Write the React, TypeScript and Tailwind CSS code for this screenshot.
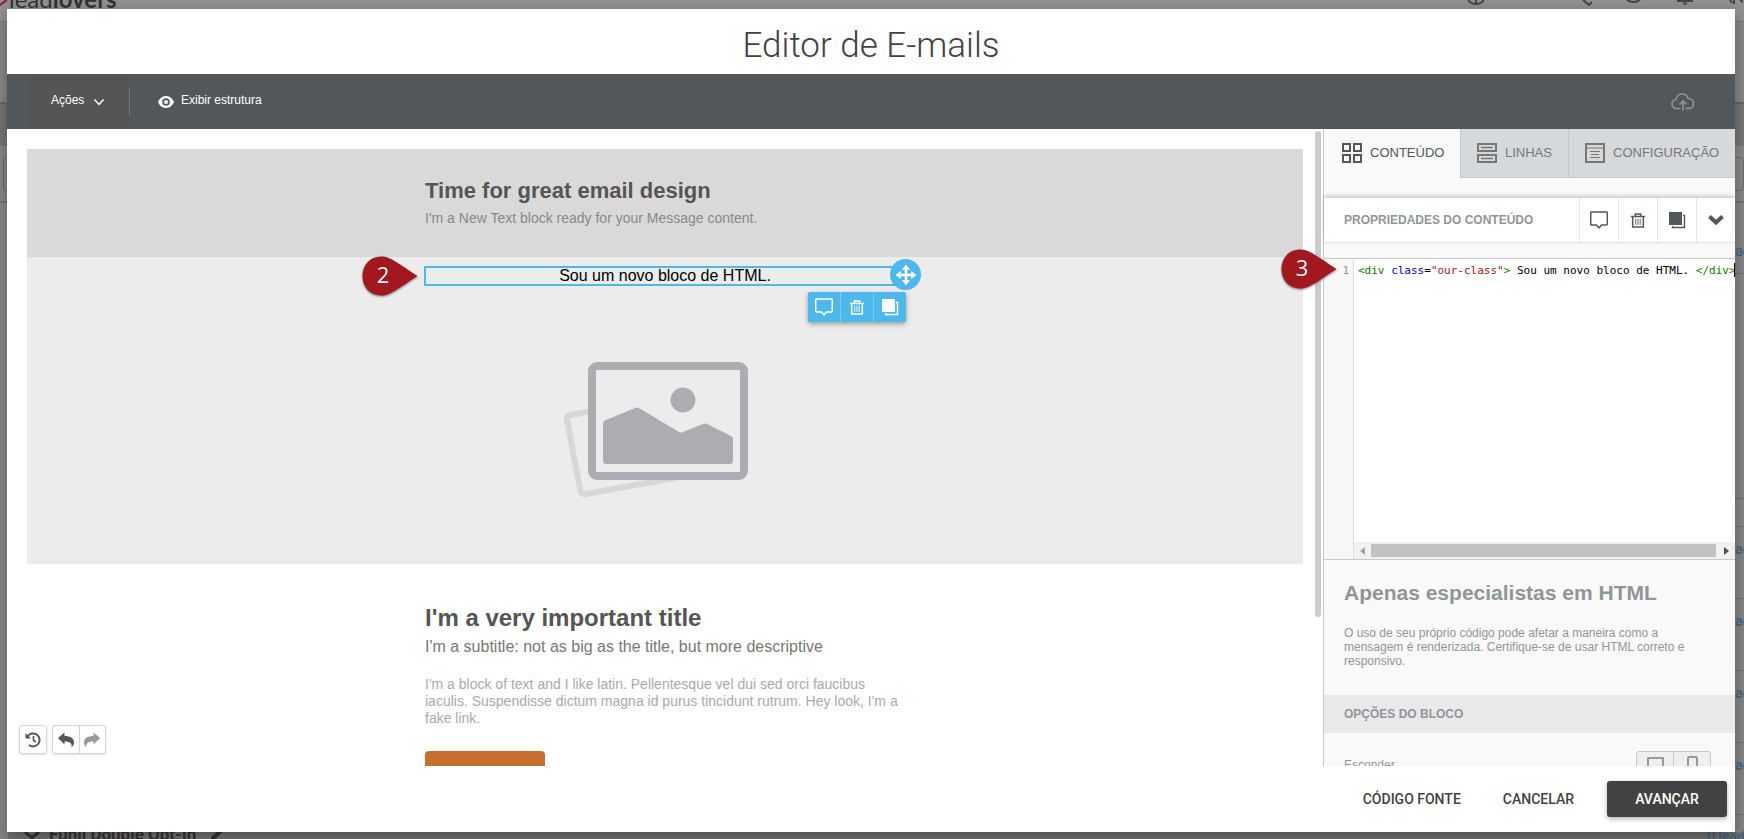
import type { ReactNode } from "react"

type IconProps = { className?: string }

function CommentIcon({ className }: IconProps) {
  return (
    <svg className={className} viewBox="0 0 18 18" fill="none" stroke="currentColor" strokeWidth="1.5" strokeLinejoin="round">
      <path d="M1.500 1h15a.8.8 0 0 1 .8.8v11.400a.8.8 0 0 1-.8.8h-5L9 17l-2.500-3h-5a.8.8 0 0 1-.8-.8V1.800a.8.8 0 0 1 .8-.8z" />
    </svg>
  )
}

function TrashIcon({ className }: IconProps) {
  return (
    <svg className={className} viewBox="0 0 18 18" fill="none" stroke="currentColor">
      <path d="M1 4.500h16M6 4.500V1.800h6v2.700" strokeWidth="1.700" />
      <path d="M3 4.500V16.300h12V4.500" strokeWidth="1.700" />
      <path d="M6.500 7v7M9 7v7M11.500 7v7" strokeWidth="1" />
    </svg>
  )
}

function CopyIcon({ className }: IconProps) {
  return (
    <svg className={className} viewBox="0 0 18 18">
      <path d="M1 1h13v13H1z" fill="currentColor" />
      <path d="M15 4.500h1.500v12h-12V15" fill="none" stroke="currentColor" strokeWidth="1.400" />
    </svg>
  )
}

function Pin({ label }: { label: string }) {
  return (
    <span className="relative block h-10 w-14 drop-shadow-[0_1px_1px_rgba(0,0,0,0.5)]">
      <svg className="h-10 w-14" viewBox="0 0 56 40">
        <path d="M19 .5C28 .5 34 6 55.500 20 34 34 28 39.500 19 39.500 8 39.500.5 31 .5 20S8 .5 19 .5z" fill="#a1181f" />
      </svg>
      <span className="absolute inset-y-0 left-0 flex w-[42px] items-center justify-center pb-1 font-['Open_Sans',sans-serif] text-[22px] text-white">
        {label}
      </span>
    </span>
  )
}

function PicturePlaceholder() {
  return (
    <svg className="h-[140px] w-[188px]" viewBox="0 0 188 140" role="img" aria-label="Imagem">
      <path d="M30 50 7 54q-4 1-3 5l13 69q1 6 6 5L116 116" fill="none" stroke="#d7d7d8" strokeWidth="6" />
      <rect x="29" y="5" width="152" height="110" rx="5" fill="#ececec" stroke="#acadb2" strokeWidth="8" />
      <circle cx="120" cy="39" r="12.500" fill="#acadb2" />
      <path d="M40 63q0-3 3-4l29-12q2-1 4 0l40 24q2 1 4 0l20-8q2-1 4 0l24 12q2 1 2 3v22q0 3-3 3H43q-3 0-3-3z" fill="#acadb2" />
    </svg>
  )
}

function Backdrop() {
  return (
    <div className="absolute inset-0 overflow-hidden bg-[#848484]" aria-hidden="true">
      <div className="relative h-[22px] border-b border-[#777] bg-[#909090]">
        <svg className="absolute top-0 left-0 h-2 w-2" viewBox="0 0 8 8">
          <path d="M0 5 7 0" stroke="#8b1a4e" strokeWidth="2" />
        </svg>
        <p className="absolute -top-4 left-[9px] font-['Lato',sans-serif] text-[24px] leading-[30px] text-[#333]">
          lead<b>lovers</b>
        </p>
        <svg className="absolute top-0 right-0 h-2 w-[284px]" viewBox="0 0 284 8" fill="none" stroke="#444" strokeWidth="2">
          <path d="M8-2a8 6 0 0 0 16 0M16-2v6M123 0l6 5 3-3M166-2a8 6 0 0 0 15 0M217 1h16M223 3.500h4M270 0l2 3M274 0v4M280 0l3 2" />
        </svg>
      </div>
      <div className="h-[82px] border-b-2 border-[#666] bg-[#868686]" />
      <div className="h-[42px] bg-[#747474]" />
      <div className="h-[57px] border-b-2 border-[#717171] bg-[#868686] pt-[11px]">
        <div className="ml-[3px] h-[34px] rounded-sm border border-[#6b6b6b]" />
      </div>
    </div>
  )
}

function BackdropLists() {
  return (
    <div className="absolute inset-0 overflow-hidden font-['Roboto',sans-serif]" aria-hidden="true">
      <ul className="absolute top-[229px] right-0 h-[610px] w-[9px] overflow-hidden text-[14px] text-[#35627a]">
        <li className="h-[45px] border-b border-[#6d6d6d] pt-3">ad</li>
        <li className="h-[225px] border-b border-[#6d6d6d]" />
        <li className="h-[28px] border-b border-[#6d6d6d]" />
        {[1, 2, 3, 4].map((n) => (
          <li key={n} className="h-[72px] border-b border-[#6d6d6d] pt-3">
            ad
          </li>
        ))}
      </ul>
      <div className="absolute right-0 bottom-0 left-2 flex h-[7px] items-end bg-[#707070]">
        <svg className="absolute top-0 left-4 h-[7px] w-4" viewBox="0 0 16 7">
          <path d="m1 0 7 6 7-6" fill="none" stroke="#333" strokeWidth="3" />
        </svg>
        <p className="absolute -top-[8px] left-[41px] text-[17px] leading-5 font-bold text-[#333]">Funil Double Opt-In</p>
        <svg className="absolute top-0 left-[202px] h-[7px] w-4" viewBox="0 0 16 7">
          <path d="m2 7 10-9" stroke="#333" strokeWidth="4" />
        </svg>
        <p className="absolute top-[-5px] right-0 w-[37px] overflow-hidden text-[14px] leading-5 whitespace-nowrap text-[#35627a]">
          0 leads
        </p>
      </div>
    </div>
  )
}

function Toolbar() {
  return (
    <div className="flex h-[55px] shrink-0 items-center bg-[#51575a] pr-10 pl-5 text-[12px] text-white">
      <button className="flex h-full w-[102px] items-center gap-[9px] bg-[#555] pb-1 pl-6">
        Ações
        <svg className="mt-1 h-3 w-3" viewBox="0 0 12 12" fill="none" stroke="currentColor" strokeWidth="1.500">
          <path d="m1.500 3.500 4.500 5 4.500-5" />
        </svg>
      </button>
      <span className="h-7 w-px bg-[#757575]" />
      <button className="flex h-full items-center gap-[7px] pb-1 pl-7">
        <svg className="mt-1 h-3 w-4" viewBox="0 0 16 12">
          <path d="M8 0C4 0 1.300 3 0 6c1.300 3 4 6 8 6s6.700-3 8-6c-1.300-3-4-6-8-6z" fill="currentColor" />
          <circle cx="8" cy="6" r="3.800" fill="#51575a" />
          <circle cx="8" cy="6" r="2" fill="currentColor" />
        </svg>
        Exibir estrutura
      </button>
      <button className="ml-auto text-[#8f9496]" aria-label="Salvar">
        <svg className="h-[18px] w-6" viewBox="0 0 24 18" fill="none" stroke="currentColor" strokeWidth="1.600">
          <path d="M9.500 15.500H6a4.500 4.500 0 0 1-1-9C5.500 3 8 1 11 1c3 0 5.500 2 6 4.500 3 0 5.500 2 5.500 5s-2 5-5 5h-3" />
          <path d="M12 17.500V8M8.500 11.500 12 8l3.500 3.500" />
        </svg>
      </button>
    </div>
  )
}

function Canvas() {
  return (
    <div className="relative min-w-0 flex-1 overflow-hidden bg-white pt-5 pr-5 pl-5">
      <section className="h-[108px] bg-[#d9d9d9]">
        <div className="mx-auto w-[480px] pt-[30px]">
          <h2 className="text-[22px] leading-6 font-bold text-[#555]">Time for great email design</h2>
          <p className="pt-1 text-[14px] leading-[22px] text-[#888]">I'm a New Text block ready for your Message content.</p>
        </div>
      </section>

      <section className="h-[307px] bg-[#ececec] pt-[9px]">
        <div className="relative mx-auto h-5 w-[482px] border-2 border-[#4db8ea] text-center text-[16px] leading-4 text-black">
          Sou um novo bloco de HTML.
          <div className="absolute -top-3 right-full mr-2">
            <Pin label="2" />
          </div>
          <button
            className="absolute -top-[9px] -right-[17px] flex h-[31px] w-[31px] items-center justify-center rounded-full bg-[#4db8ea] text-white"
            aria-label="Mover"
          >
            <svg className="h-5 w-5" viewBox="0 0 20 20" fill="currentColor">
              <path d="M10 0l3.500 4.500H11v4.500h4.500V6.500L20 10l-4.500 3.500V11H11v4.500h2.500L10 20l-3.500-4.500H9V11H4.500v2.500L0 10l4.500-3.500V9H9V4.500H6.500z" stroke="currentColor" strokeWidth=".6" />
            </svg>
          </button>
          <div className="absolute top-6 -right-[2px] flex h-[30px] w-[98px] divide-x divide-[#7fcbef] rounded-xs bg-[#4db8ea] text-white shadow-[0_2px_5px_rgba(0,0,0,0.35)]">
            <button className="flex flex-1 items-center justify-center" aria-label="Comentar">
              <CommentIcon className="h-[18px] w-[18px]" />
            </button>
            <button className="flex flex-1 items-center justify-center" aria-label="Excluir">
              <TrashIcon className="h-[17px] w-4" />
            </button>
            <button className="flex flex-1 items-center justify-center" aria-label="Duplicar">
              <CopyIcon className="h-[18px] w-[18px]" />
            </button>
          </div>
        </div>
        <div className="mx-auto w-[480px] pt-[75px] pl-[138px]">
          <PicturePlaceholder />
        </div>
      </section>

      <section className="mx-auto w-[480px] pt-10">
        <h2 className="text-[24px] leading-7 font-bold text-[#555]">I'm a very important title</h2>
        <p className="pt-1 text-[16px] leading-[22px] text-[#777]">I'm a subtitle: not as big as the title, but more descriptive</p>
        <p className="pt-[18px] text-[14px] leading-[17px] text-[#aaa]">
          I'm a block of text and I like latin. Pellentesque vel dui sed orci faucibus iaculis. Suspendisse dictum magna
          id purus tincidunt rutrum. Hey look, I'm a fake link.
        </p>
        <button className="mt-6 block h-10 w-[120px] rounded-[4px] bg-[#c7702e]" aria-label="Button" />
      </section>

      <span className="absolute top-[2px] right-[2px] h-[486px] w-[6px] rounded-full bg-[#ccc]" />

      <div className="absolute bottom-3 left-3 flex gap-[5px] text-[#51575a]">
        <button
          className="flex h-[29px] w-7 items-center justify-center rounded-[3px] border border-[#d5d5d5] bg-white shadow-sm"
          aria-label="Histórico"
        >
          <svg className="h-4 w-4" viewBox="0 0 16 16" fill="none" stroke="currentColor" strokeWidth="2">
            <path d="M2.500 4.500A6.500 6.500 0 1 1 4 13" />
            <path d="M8.500 4v4.500l2.500 1.500" strokeWidth="1.700" />
            <path d="M.5 1v5.500H6z" fill="currentColor" stroke="none" />
          </svg>
        </button>
        <div className="flex h-[29px] w-[54px] divide-x divide-[#d5d5d5] rounded-[3px] border border-[#d5d5d5] bg-white shadow-sm">
          <button className="flex flex-1 items-center justify-center" aria-label="Desfazer">
            <svg className="h-4 w-4" viewBox="0 0 16 16" fill="currentColor">
              <path d="M0 6 6.500.500V4C12 4 16 6 16 10.500c0 2-1 3.500-2.500 5 .8-4-1.500-6-7-6v3z" />
            </svg>
          </button>
          <button className="flex flex-1 items-center justify-center text-[#999]" aria-label="Refazer">
            <svg className="h-4 w-4" viewBox="0 0 16 16" fill="currentColor">
              <path d="M16 6 9.500.500V4C4 4 0 6 0 10.500c0 2 1 3.500 2.500 5-.8-4 1.500-6 7-6v3z" />
            </svg>
          </button>
        </div>
      </div>
    </div>
  )
}

function HeaderButton({ label, children }: { label: string; children: ReactNode }) {
  return (
    <button className="flex w-[39px] items-center justify-center border-l border-[#e4e4e4]" aria-label={label}>
      {children}
    </button>
  )
}

function Sidebar() {
  return (
    <aside className="relative flex w-[412px] shrink-0 flex-col border-l border-[#c8c8c8] bg-[#f9f9f9] text-[#8f9699]">
      <div className="flex h-[49px] shrink-0 text-[13px] text-[#777]">
        <button className="flex w-[136px] items-center gap-2 pb-[2px] pl-[18px] text-[#51575a]">
          <svg className="h-5 w-5" viewBox="0 0 20 20" fill="none" stroke="currentColor" strokeWidth="2">
            <path d="M1 1h7v7H1zM12 1h7v7h-7zM1 12h7v7H1zM12 12h7v7h-7z" />
          </svg>
          CONTEÚDO
        </button>
        <button className="flex w-[108px] items-center gap-2 border-b border-l border-[#c8c8c8] bg-[#d5d9dc] pb-px pl-4">
          <svg className="h-5 w-5" viewBox="0 0 20 20" fill="none" stroke="currentColor" strokeWidth="2">
            <path d="M1 1h18v7H1zM1 12h18v7H1z" />
            <path d="M4 4.500h12M4 15.500h12" strokeWidth="1.400" />
          </svg>
          LINHAS
        </button>
        <button className="flex flex-1 items-center gap-2 border-b border-l border-[#c8c8c8] bg-[#d5d9dc] pb-px pl-4">
          <svg className="h-5 w-5 shrink-0" viewBox="0 0 20 20" fill="none" stroke="currentColor" strokeWidth="1.500">
            <path d="M1 1h18v18H1z" strokeWidth="2" />
            <path d="M2 5h16" strokeWidth="1" />
            <path d="M5 8.500h10M6 11.500h8M5 14.500h10" strokeWidth="1.200" />
          </svg>
          CONFIGURAÇÃO
        </button>
      </div>

      <div className="mt-5 flex h-[45px] shrink-0 border-b border-[#e4e4e4] bg-white shadow-[0_-2px_4px_rgba(0,0,0,0.2)]">
        <h3 className="flex flex-1 items-center pl-5 text-[12px] font-bold">PROPRIEDADES DO CONTEÚDO</h3>
        <div className="flex text-[#51575a]">
          <HeaderButton label="Comentar">
            <CommentIcon className="h-[18px] w-[18px]" />
          </HeaderButton>
          <HeaderButton label="Excluir">
            <TrashIcon className="h-[17px] w-4" />
          </HeaderButton>
          <HeaderButton label="Duplicar">
            <CopyIcon className="h-[18px] w-[18px]" />
          </HeaderButton>
          <HeaderButton label="Recolher">
            <svg className="h-4 w-4" viewBox="0 0 16 16" fill="none" stroke="currentColor" strokeWidth="4">
              <path d="m1.500 4.500 6.500 6 6.500-6" />
            </svg>
          </HeaderButton>
        </div>
      </div>

      <div className="relative mt-[15px] flex h-[302px] shrink-0 border-y border-[#c8c8c8] bg-white font-['DejaVu_Sans_Mono',monospace] text-[11px] leading-[14px]">
        <div className="w-[30px] shrink-0 border-r border-[#ddd] bg-[#f7f7f7] pt-[5px] pr-1 text-right text-[#999]">1</div>
        <div className="flex min-w-0 flex-1 flex-col">
          <code className="flex-1 pt-[5px] pl-1 font-['DejaVu_Sans_Mono',monospace] whitespace-pre text-black">
            <span className="text-[#117700]">{"<div"}</span> <span className="text-[#0000cc]">class</span>=
            <span className="text-[#aa1111]">{'"our-class"'}</span>
            <span className="text-[#117700]">{">"}</span>
            {" Sou um novo bloco de HTML. "}
            <span className="text-[#117700]">{"</div>"}</span>
          </code>
          <div className="flex h-[17px] items-center gap-[6px] bg-[#f1f1f1] px-[6px]">
            <svg className="h-2 w-[5px]" viewBox="0 0 5 8">
              <path d="M5 0v8L0 4z" fill="#a3a3a3" />
            </svg>
            <span className="h-[13px] flex-1 bg-[#c1c1c1]" />
            <svg className="ml-[2px] h-2 w-[5px]" viewBox="0 0 5 8">
              <path d="M0 0v8l5-4z" fill="#505050" />
            </svg>
          </div>
        </div>
        <span className="absolute top-1 right-0 h-[14px] w-px bg-black" />
        <div className="absolute -top-[10px] -left-[43px]">
          <Pin label="3" />
        </div>
      </div>

      <div className="px-5 pt-5">
        <h3 className="text-[21px] leading-[26px] font-bold">Apenas especialistas em HTML</h3>
        <p className="pt-5 pr-7 text-[12px] leading-[14px]">
          O uso de seu próprio código pode afetar a maneira como a mensagem é renderizada. Certifique-se de usar HTML
          correto e responsivo.
        </p>
      </div>
      <h3 className="mt-[27px] flex h-[38px] shrink-0 items-center bg-[#e9e9e9] pl-5 text-[12px] font-bold">
        OPÇÕES DO BLOCO
      </h3>
      <div className="flex shrink-0 items-start justify-between pt-[18px] pr-6 pl-5 text-[12px]">
        <span className="pt-[7px] leading-[14px]">Esconder</span>
        <div className="flex h-8 w-[75px] divide-x divide-[#c8c8c8] rounded-[3px] border border-[#c8c8c8] bg-[#efefef]">
          <button className="flex flex-1 justify-center pt-[5px]" aria-label="Desktop">
            <span className="h-4 w-[17px] rounded-[1px] border-2 border-[#999]" />
          </button>
          <button className="flex flex-1 justify-center pt-1" aria-label="Celular">
            <span className="h-5 w-[11px] rounded-[2px] border-2 border-[#999]" />
          </button>
        </div>
      </div>
    </aside>
  )
}

export default function App() {
  return (
    <div className="relative flex h-screen overflow-hidden pt-[9px] pr-[9px] pb-[7px] pl-[7px] font-['Liberation_Sans',Arial,sans-serif]">
      <Backdrop />
      <BackdropLists />
      <main className="relative flex min-w-0 flex-1 flex-col bg-white shadow-[0_4px_12px_rgba(0,0,0,0.3)]">
        <h1 className="flex h-[65px] shrink-0 items-center justify-center pt-2 font-['Roboto',sans-serif] text-[35px] leading-10 font-light text-[#424242]">
          Editor de E-mails
        </h1>
        <Toolbar />
        <div className="flex min-h-0 flex-1 overflow-hidden">
          <Canvas />
          <Sidebar />
        </div>
        <footer className="flex h-[66px] shrink-0 items-center justify-end pr-2 font-['Roboto',sans-serif] text-[14px] font-medium text-[#424242]">
          <button className="px-[21px]">CÓDIGO FONTE</button>
          <button className="mr-3 px-[21px]">CANCELAR</button>
          <button className="h-9 w-[120px] rounded-[3px] bg-[#424242] text-white shadow-[0_2px_5px_rgba(0,0,0,0.3)]">
            AVANÇAR
          </button>
        </footer>
      </main>
    </div>
  )
}
